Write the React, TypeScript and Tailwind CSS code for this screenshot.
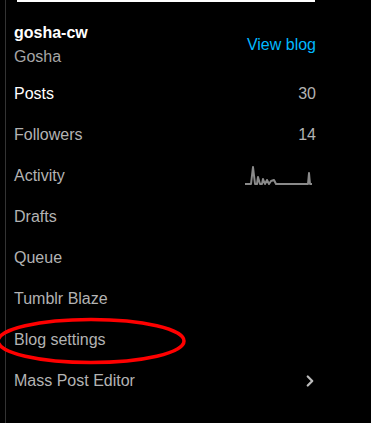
import { ChevronRight } from 'lucide-react'

const rows = [
  { label: 'Posts', value: '30', active: true },
  { label: 'Followers', value: '14' },
  { label: 'Activity', spark: true },
  { label: 'Drafts' },
  { label: 'Queue' },
  { label: 'Tumblr Blaze' },
  { label: 'Blog settings' },
  { label: 'Mass Post Editor', chevron: true },
]

function Sparkline() {
  const pts = [
    [0, 20], [6, 20], [8, 3], [10, 20], [12, 20], [13, 13], [15, 20], [17, 20], [18, 15],
    [20, 20], [22, 16], [24, 20], [26, 17], [29, 16], [31, 20], [36, 20], [63, 20], [64, 9],
    [65, 20], [67, 20],
  ]
  return (
    <svg width="70" height="24" viewBox="0 0 70 24" className="mr-[1px]">
      <polyline
        points={pts.map((p) => p.join(',')).join(' ')}
        fill="none"
        stroke="#8a8a8a"
        strokeWidth="2"
        strokeLinejoin="round"
      />
    </svg>
  )
}

export default function App() {
  return (
    <div className="relative h-[423px] w-[371px] overflow-hidden bg-black font-['Liberation_Sans',Arial,sans-serif]">
      <div className="ml-[5px] h-full w-[311px] border-l border-[#333]">
        <div className="ml-[11px] h-[2px] w-[298px] bg-white" />
        <div className="flex items-center justify-between pl-[8px] pt-[19px]">
          <div className="flex flex-col">
            <span className="text-[16px] font-bold leading-[24px] text-white">gosha-cw</span>
            <span className="text-[16px] leading-[24px] text-[#a6a6a6]">Gosha</span>
          </div>
          <a className="text-[16px] leading-[24px] text-[#00b8ff]">View blog</a>
        </div>
        <ul className="mt-[4px] pl-[8px]">
          {rows.map((r) => (
            <li key={r.label} className="flex h-[41px] items-center justify-between">
              <span className={`text-[16px] ${r.active ? 'text-white' : 'text-[#b3b3b3]'}`}>
                {r.label}
              </span>
              {r.value && <span className="text-[16px] text-[#b3b3b3]">{r.value}</span>}
              {r.spark && <Sparkline />}
              {r.chevron && <ChevronRight size={18} strokeWidth={3} className="-mr-[3px] text-[#bbb]" />}
            </li>
          ))}
        </ul>
      </div>
      <svg className="absolute left-0 top-[316px]" width="190" height="50" viewBox="0 0 190 50">
        <ellipse cx="91" cy="25" rx="93" ry="21.5" fill="none" stroke="#ff0000" strokeWidth="3.5" />
      </svg>
    </div>
  )
}
